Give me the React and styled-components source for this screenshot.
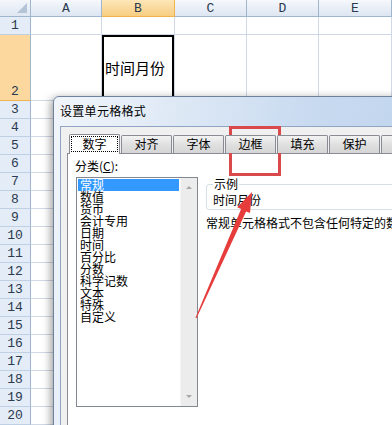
import React from 'react';
import styled, { createGlobalStyle, css } from 'styled-components';

// styles
const GlobalStyle = createGlobalStyle`
  html, body {
    margin: 0;
    padding: 0;
    background: #fff;
    overflow: hidden;
  }
  body {
    font-family: "Noto Sans CJK SC", sans-serif;
  }
`;

const Page = styled.div`
  position: relative;
  width: 392px;
  height: 425px;
  overflow: hidden;
`;

const Sheet = styled.div`
  display: grid;
  grid-template-columns: 31px 71px 73px 72px 72px 73px;
  grid-template-rows: 17px 18px 66px repeat(18, 18px);
`;

const headBorder = css`
  box-sizing: border-box;
  border-right: 1px solid #9eb6ce;
  border-bottom: 1px solid #9eb6ce;
`;

const Corner = styled.div`
  ${headBorder};
  position: relative;
  background: linear-gradient(#f3f6fb, #dfe7f2);

  &::after {
    content: '';
    position: absolute;
    right: 3px;
    bottom: 3px;
    border-style: solid;
    border-width: 0 0 10px 10px;
    border-color: transparent transparent #b4c3d7 transparent;
  }
`;

const ColHead = styled.div`
  ${headBorder};
  display: flex;
  align-items: center;
  justify-content: center;
  font-family: "Liberation Mono", monospace;
  font-size: 13px;
  color: #2b3a4e;
  background: linear-gradient(#f5f8fc, #dde6f2);

  ${props => props.$active && css`
    background: linear-gradient(#fde6b8, #f7cd82);
    border-right-color: #f0b44e;
    border-bottom-color: #f0b44e;
  `}
`;

const RowHead = styled.div`
  ${headBorder};
  display: flex;
  align-items: flex-end;
  justify-content: center;
  font-family: "Liberation Mono", monospace;
  font-size: 13px;
  line-height: 16px;
  color: #2b3a4e;
  background: #e4ecf7;
  border-bottom-color: #c0d0e4;

  ${props => props.$active && css`
    background: #fcd89f;
    border-bottom-color: #f0b44e;
  `}
`;

const Cell = styled.div`
  box-sizing: border-box;
  border-right: 1px solid #d0d7e5;
  border-bottom: 1px solid #d0d7e5;
  display: flex;
  align-items: center;
  padding-left: 3px;
  font-size: 15px;
  color: #000;

  ${props => props.$active && css`
    box-shadow: inset 0 0 0 2px #000;
  `}
`;

const Dialog = styled.div`
  position: absolute;
  left: 53px;
  top: 96px;
  width: 380px;
  height: 340px;
  box-sizing: border-box;
  border: 1px solid #6f829c;
  border-radius: 6px 6px 0 0;
  background: linear-gradient(100deg, #f1f5fb 0%, #dde8f5 30%, #c8daf0 60%, #bcd2ed 100%);
  box-shadow: -2px 2px 9px rgba(0, 0, 0, 0.4);
  display: flex;
  flex-direction: column;
`;

const TitleBar = styled.div`
  height: 29px;
  box-sizing: border-box;
  padding: 5px 0 0 6px;
  font-size: 12px;
  line-height: 18px;
  letter-spacing: 0.3px;
  color: #000;
`;

const Client = styled.div`
  flex: 1;
  margin-left: 6px;
  background: #f0f0f0;
  border-top: 1px solid #90a5c1;
  border-left: 1px solid #90a5c1;
  padding: 7px 0 0 8px;
  display: flex;
  flex-direction: column;
`;

const TabStrip = styled.div`
  display: flex;
  align-items: flex-end;
  height: 19px;
  position: relative;
  z-index: 1;
`;

const Tab = styled.div`
  box-sizing: border-box;
  width: 52px;
  height: 18px;
  margin-left: 1px;
  border: 1px solid #898c95;
  border-bottom: none;
  border-radius: 2px 2px 0 0;
  background: linear-gradient(#f3f3f3, #e0e0e0 50%, #d5d5d5);
  font-size: 12px;
  line-height: 16px;
  text-align: center;
  color: #000;

  ${props => props.$selected && css`
    margin-left: 0;
    height: 20px;
    margin-bottom: -1px;
    background: #fff;
    padding: 1px;
    line-height: 16px;
  `}
`;

const FocusLabel = styled.div`
  height: 16px;
  border: 1px dotted #000;
  box-sizing: border-box;
  line-height: 14px;
`;

const TabPanel = styled.div`
  flex: 1;
  margin-left: -2px;
  background: #fff;
  border: 1px solid #898c95;
  padding: 5px 0 0 7px;
  display: flex;
  gap: 8px;
`;

const LeftCol = styled.div`
  display: flex;
  flex-direction: column;
`;

const Label = styled.div`
  font-size: 12px;
  line-height: 14px;
  height: 14px;
  color: #000;
  margin-bottom: 4px;

  u {
    text-decoration: underline;
  }
`;

const ListBox = styled.div`
  margin-left: 1px;
  width: 122px;
  height: 230px;
  box-sizing: border-box;
  border: 1px solid #828790;
  display: flex;
`;

const ListItems = styled.div`
  flex: 1;
  padding: 1px;
`;

const ListItem = styled.div`
  font-size: 12px;
  line-height: 12px;
  height: 12px;
  padding-left: 2px;
  color: #000;
  white-space: nowrap;

  ${props => props.$selected && css`
    background: #3399ff;
    color: #fff;
    height: 12px;
  `}
`;

const ScrollBar = styled.div`
  width: 17px;
  background: #ececec;
  border-left: 1px solid #f6f6f6;
  display: flex;
  flex-direction: column;
  justify-content: space-between;
  align-items: center;
  padding: 8px 0 8px;
  box-sizing: border-box;
`;

const Arrow = styled.div`
  width: 0;
  height: 0;
  border-left: 3px solid transparent;
  border-right: 3px solid transparent;
  ${props => (props.$down
    ? css`border-top: 3px solid #a6a6a6;`
    : css`border-bottom: 3px solid #a6a6a6;`)}
`;

const RightCol = styled.div`
  display: flex;
  flex-direction: column;
  padding-top: 25px;
`;

const Group = styled.div`
  width: 200px;
  height: 26px;
  box-sizing: border-box;
  border: 1px solid #d5dfe5;
  border-radius: 3px;
  padding-left: 6px;
`;

const Legend = styled.div`
  width: fit-content;
  margin-top: -8px;
  background: #fff;
  padding: 0 1px;
  font-size: 12px;
  line-height: 13px;
  color: #000;
`;

const Sample = styled.div`
  font-size: 12px;
  line-height: 12px;
  margin-top: 4px;
  color: #000;
`;

const Description = styled.div`
  margin-top: 6px;
  font-size: 12px;
  line-height: 14px;
  white-space: nowrap;
  color: #000;
`;

const Highlight = styled.div`
  position: absolute;
  left: 229px;
  top: 126px;
  width: 52px;
  height: 50px;
  box-sizing: border-box;
  border: 3px solid #d9484b;
`;

const Overlay = styled.svg`
  position: absolute;
  left: 0;
  top: 0;
  pointer-events: none;
`;

// data
const columns = ['A', 'B', 'C', 'D', 'E'];
const rows = Array.from({ length: 20 }, (_, i) => i + 1);
const tabs = ['数字', '对齐', '字体', '边框', '填充', '保护', '其他'];
const categories = ['常规', '数值', '货币', '会计专用', '日期', '时间', '百分比', '分数', '科学记数', '文本', '特殊', '自定义'];

// component
const App = () => (
  <Page>
    <GlobalStyle />
    <Sheet>
      <Corner />
      {columns.map(c => (
        <ColHead key={c} $active={c === 'B'}>{c}</ColHead>
      ))}
      {rows.map(r => (
        <React.Fragment key={r}>
          <RowHead $active={r === 2}>{r}</RowHead>
          {columns.map(c => (
            <Cell key={c} $active={r === 2 && c === 'B'}>
              {r === 2 && c === 'B' ? '时间月份' : null}
            </Cell>
          ))}
        </React.Fragment>
      ))}
    </Sheet>

    <Dialog>
      <TitleBar>设置单元格格式</TitleBar>
      <Client>
        <TabStrip>
          {tabs.map((t, i) => (
            <Tab key={t} $selected={i === 0}>
              {i === 0 ? <FocusLabel>{t}</FocusLabel> : t}
            </Tab>
          ))}
        </TabStrip>
        <TabPanel>
          <LeftCol>
            <Label>分类(<u>C</u>):</Label>
            <ListBox>
              <ListItems>
                {categories.map((c, i) => (
                  <ListItem key={c} $selected={i === 0}>{c}</ListItem>
                ))}
              </ListItems>
              <ScrollBar>
                <Arrow />
                <Arrow $down />
              </ScrollBar>
            </ListBox>
          </LeftCol>
          <RightCol>
            <Group>
              <Legend>示例</Legend>
              <Sample>时间月份</Sample>
            </Group>
            <Description>常规单元格格式不包含任何特定的数字格式。</Description>
          </RightCol>
        </TabPanel>
      </Client>
    </Dialog>

    <Highlight />
    <Overlay width="392" height="425" viewBox="0 0 392 425">
      <polygon
        fill="#e63c3c"
        points="195.5,317.8 241.1,209.0 237.2,207.3 252,192 250.0,213.1 246.1,211.4 196.5,318.2"
      />
    </Overlay>
  </Page>
);

export default App;
